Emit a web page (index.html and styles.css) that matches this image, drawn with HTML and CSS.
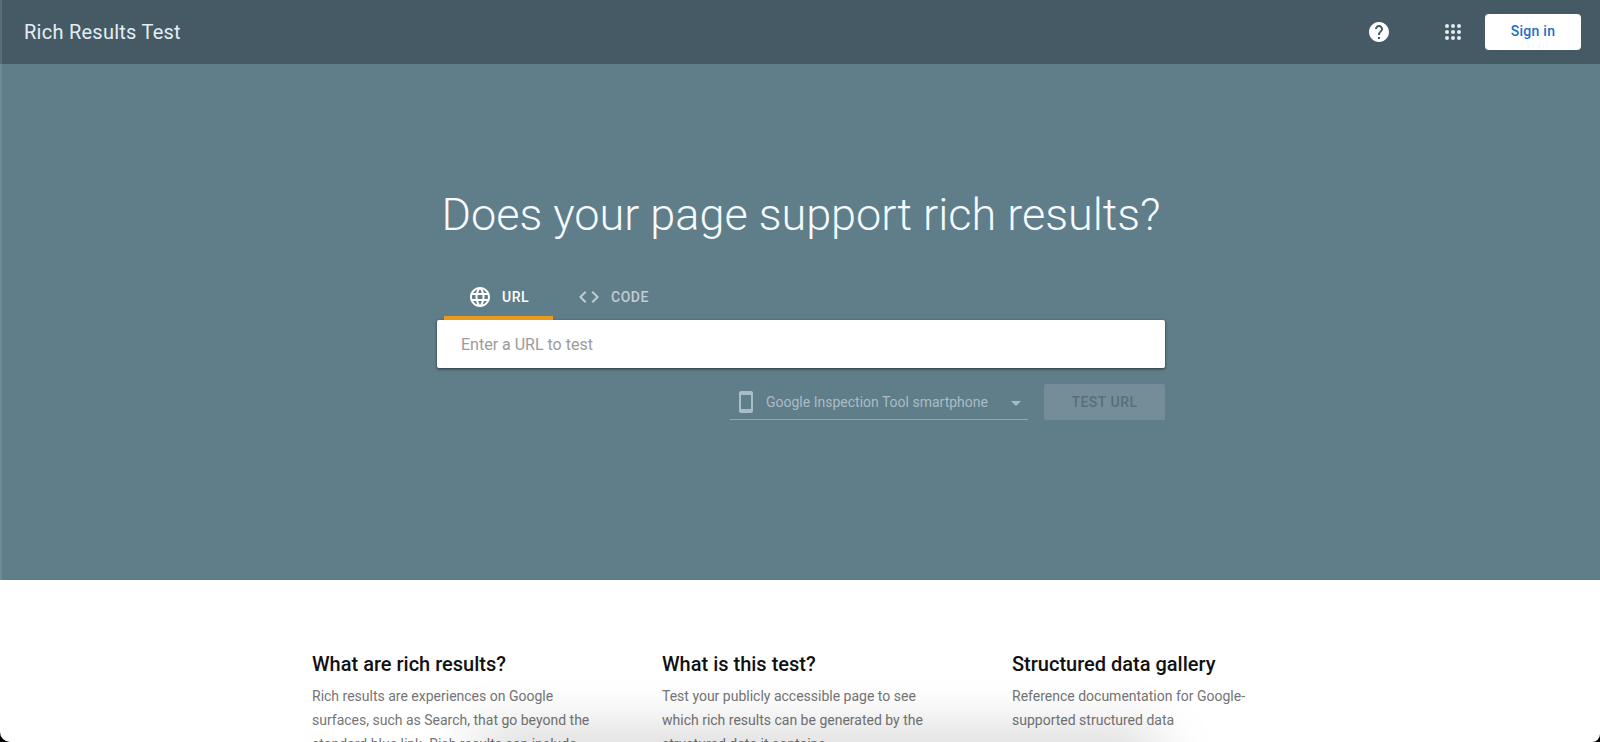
FILE: index.html
```html
<!DOCTYPE html>
<html lang="en">
<head>
  <meta charset="UTF-8">
  <title>Rich Results Test</title>
  <meta name="viewport" content="width=device-width, initial-scale=1.0">
  <link rel="stylesheet" href="styles.css">
</head>
<body>
  <div class="page">
    <header class="topbar">
      <a class="brand" href="#">Rich Results Test</a>
      <div class="actions">
        <button class="icon-btn help" type="button" aria-label="Help">
          <svg width="24" height="24" viewBox="0 0 24 24" fill="currentColor"><path d="M12 2C6.48 2 2 6.48 2 12s4.480 10 10 10 10-4.480 10-10S17.520 2 12 2zm1 17h-2v-2h2v2zm2.070-7.750l-.9.920C13.450 12.900 13 13.500 13 15h-2v-.5c0-1.100.450-2.100 1.170-2.830l1.240-1.260c.370-.360.590-.860.590-1.410 0-1.100-.9-2-2-2s-2 .9-2 2H8c0-2.210 1.790-4 4-4s4 1.790 4 4c0 .880-.360 1.680-.930 2.250z"/></svg>
        </button>
        <button class="icon-btn apps" type="button" aria-label="Google apps">
          <svg width="24" height="24" viewBox="0 0 24 24" fill="currentColor"><circle cx="6" cy="6" r="2"/><circle cx="12" cy="6" r="2"/><circle cx="18" cy="6" r="2"/><circle cx="6" cy="12" r="2"/><circle cx="12" cy="12" r="2"/><circle cx="18" cy="12" r="2"/><circle cx="6" cy="18" r="2"/><circle cx="12" cy="18" r="2"/><circle cx="18" cy="18" r="2"/></svg>
        </button>
        <button class="signin" type="button">Sign in</button>
      </div>
    </header>

    <main class="hero">
      <h1>Does your page support rich results?</h1>
      <form class="tester">
        <div class="tabs" role="tablist">
          <button class="tab active" type="button" role="tab" aria-selected="true">
            <svg width="24" height="24" viewBox="0 0 24 24" fill="currentColor"><path d="M11.990 2C6.470 2 2 6.480 2 12s4.470 10 9.990 10C17.520 22 22 17.520 22 12S17.520 2 11.990 2zm6.930 6h-2.950c-.320-1.250-.780-2.450-1.380-3.560 1.840.630 3.370 1.910 4.330 3.560zM12 4.040c.830 1.200 1.480 2.530 1.910 3.960h-3.820c.430-1.430 1.080-2.760 1.910-3.960zM4.260 14C4.100 13.360 4 12.690 4 12s.100-1.360.260-2h3.380c-.080.660-.140 1.320-.140 2s.060 1.340.140 2H4.260zm.820 2h2.950c.320 1.250.780 2.450 1.380 3.560-1.840-.630-3.370-1.900-4.330-3.560zm2.950-8H5.080c.960-1.660 2.490-2.930 4.330-3.560C8.810 5.550 8.350 6.750 8.030 8zM12 19.960c-.830-1.200-1.480-2.530-1.910-3.960h3.820c-.430 1.430-1.080 2.760-1.910 3.960zM14.340 14H9.660c-.090-.660-.160-1.320-.160-2s.070-1.350.160-2h4.680c.090.650.160 1.320.160 2s-.070 1.340-.160 2zm.250 5.560c.6-1.110 1.060-2.310 1.380-3.560h2.950c-.960 1.650-2.490 2.930-4.330 3.560zM16.360 14c.080-.660.140-1.320.140-2s-.060-1.340-.140-2h3.380c.160.640.260 1.310.260 2s-.100 1.360-.260 2h-3.380z"/></svg>
            URL
          </button>
          <button class="tab" type="button" role="tab" aria-selected="false">
            <svg width="24" height="24" viewBox="0 0 24 24" fill="currentColor"><path d="M9.400 16.600L4.800 12l4.600-4.600L8 6l-6 6 6 6 1.400-1.400zm5.200 0l4.600-4.600-4.600-4.600L16 6l6 6-6 6-1.400-1.400z"/></svg>
            CODE
          </button>
        </div>
        <input class="url-input" type="text" placeholder="Enter a URL to test" aria-label="Enter a URL to test">
        <div class="controls">
          <div class="agent">
            <svg width="24" height="24" viewBox="0 0 24 24" fill="currentColor"><path d="M17 1.010L7 1c-1.100 0-2 .9-2 2v18c0 1.100.9 2 2 2h10c1.100 0 2-.9 2-2V3c0-1.100-.9-1.990-2-1.990zM17 19H7V5h10v14z"/></svg>
            <select class="agent-select" aria-label="User agent" disabled>
              <option>Google Inspection Tool smartphone</option>
            </select>
            <svg width="24" height="24" viewBox="0 0 24 24" fill="currentColor"><path d="M7 11l5 5 5-5z"/></svg>
          </div>
          <button class="test-btn" type="submit" disabled>TEST URL</button>
        </div>
      </form>
    </main>

    <section class="info">
      <article class="card">
        <h2>What are rich results?</h2>
        <p>Rich results are experiences on Google surfaces, such as Search, that go beyond the standard blue link. Rich results can include carousels, images, or other non-textual elements.</p>
      </article>
      <article class="card">
        <h2>What is this test?</h2>
        <p>Test your publicly accessible page to see which rich results can be generated by the structured data it contains.</p>
      </article>
      <article class="card">
        <h2>Structured data gallery</h2>
        <p>Reference documentation for Google-supported structured data</p>
      </article>
    </section>
    <div class="bottom-shade"></div>
  </div>
</body>
</html>
```
FILE: styles.css
```css
* {
  box-sizing: border-box;
}
body {
  margin: 0;
  background: #000;
  font-family: Roboto, "Liberation Sans", sans-serif;
}
button, input, select {
  font-family: inherit;
}
.page {
  position: relative;
  display: flex;
  flex-direction: column;
  height: 100vh;
  overflow: hidden;
  background: #fff;
  border-radius: 0 0 8px 10px;
}

/* top bar */
.topbar {
  display: flex;
  align-items: center;
  justify-content: space-between;
  flex-shrink: 0;
  height: 64px;
  padding: 0 19px 0 22px;
  border-left: 2px solid #576c77;
  background: #465a65;
}
.brand {
  color: #e3eef4;
  font-size: 20px;
  letter-spacing: 0.25px;
  text-decoration: none;
}
.actions {
  display: flex;
  align-items: center;
}
.icon-btn {
  display: flex;
  padding: 8px;
  border: none;
  background: none;
  color: #fff;
  cursor: pointer;
}
.help {
  margin-right: 34px;
}
.apps {
  margin-right: 12px;
  color: #e3ebef;
}
.signin {
  width: 96px;
  height: 36px;
  padding: 0 0 2px;
  border: none;
  border-radius: 4px;
  background: #fff;
  color: #1a6fc9;
  font-size: 14px;
  font-weight: 500;
  letter-spacing: 0.25px;
  cursor: pointer;
}

/* hero */
.hero {
  display: flex;
  flex-direction: column;
  align-items: center;
  flex-shrink: 0;
  padding: 121px 24px 160px;
  border-left: 2px solid #6f8b98;
  background: #607d8a;
}
h1 {
  margin: 0 0 35px;
  color: #f5fbff;
  font-size: 45px;
  font-weight: 300;
  line-height: 60px;
}
.tester {
  width: 100%;
  max-width: 728px;
}
.tabs {
  display: flex;
  padding-left: 7px;
}
.tab {
  display: flex;
  align-items: center;
  gap: 10px;
  height: 40px;
  padding: 0 24px 3px;
  border: none;
  border-bottom: 4px solid transparent;
  background: none;
  color: #c0cdd3;
  font-size: 14px;
  font-weight: 500;
  letter-spacing: 0.5px;
  cursor: pointer;
}
.tab.active {
  border-bottom-color: #e89a1a;
  color: #fff;
}
.url-input {
  display: block;
  width: 100%;
  height: 48px;
  padding: 0 24px;
  border: none;
  border-radius: 2px;
  background: #fff;
  box-shadow: 0 1px 3px rgba(0, 0, 0, 0.6);
  font-size: 16px;
}
.url-input::placeholder {
  color: #9b9b9b;
}
.controls {
  display: flex;
  justify-content: flex-end;
  gap: 16px;
  margin-top: 16px;
}
.agent {
  display: flex;
  align-items: center;
  width: 298px;
  height: 36px;
  padding-left: 4px;
  border-bottom: 1px solid #8fa5af;
  color: #aabcc4;
}
.agent-select {
  flex: 1;
  margin-left: 8px;
  padding: 0;
  border: none;
  background: none;
  color: inherit;
  font-size: 14px;
  opacity: 1;
  appearance: none;
}
.test-btn {
  width: 121px;
  height: 36px;
  border: none;
  border-radius: 2px;
  background: #748d99;
  color: #586f7b;
  font-size: 14px;
  font-weight: 500;
  letter-spacing: 0.5px;
}

/* info columns */
.info {
  display: grid;
  grid-template-columns: repeat(3, 1fr);
  width: 100%;
  max-width: 1050px;
  margin: 0 auto;
  padding-top: 68px;
}
.card {
  padding: 0 31px 0 37px;
}
h2 {
  margin: 0 0 4px;
  color: #111;
  font-size: 20px;
  font-weight: 500;
  line-height: 32px;
}
p {
  margin: 0;
  color: #757575;
  font-size: 14px;
  line-height: 24px;
}
/* soft shadow rising from the bottom edge */
.bottom-shade {
  position: absolute;
  left: 30%;
  right: 28%;
  bottom: -24px;
  height: 24px;
  box-shadow: 0 0 56px 4px rgba(0, 0, 0, 0.25);
  pointer-events: none;
}
```
